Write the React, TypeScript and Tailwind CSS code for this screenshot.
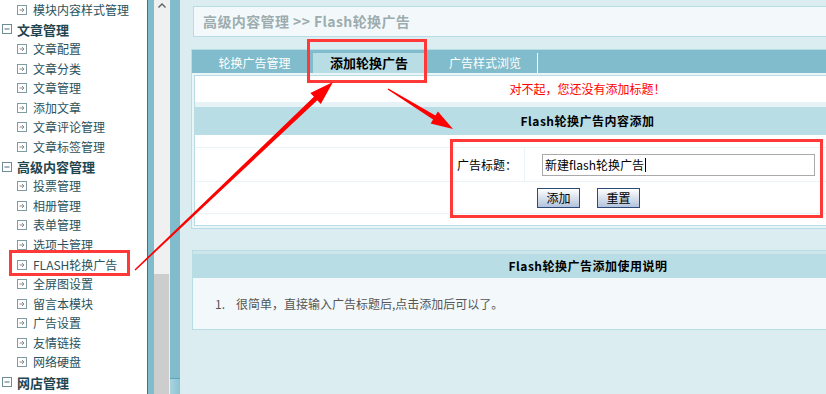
import React from "react";

type Item = { t: string; h?: boolean };

const menu: Item[] = [
  { t: "模块内容样式管理" },
  { t: "文章管理", h: true },
  { t: "文章配置" },
  { t: "文章分类" },
  { t: "文章管理" },
  { t: "添加文章" },
  { t: "文章评论管理" },
  { t: "文章标签管理" },
  { t: "高级内容管理", h: true },
  { t: "投票管理" },
  { t: "相册管理" },
  { t: "表单管理" },
  { t: "选项卡管理" },
  { t: "FLASH轮换广告" },
  { t: "全屏图设置" },
  { t: "留言本模块" },
  { t: "广告设置" },
  { t: "友情链接" },
  { t: "网络硬盘" },
  { t: "网店管理", h: true },
  { t: "商品管理" },
];

function ItemIcon() {
  return (
    <svg width="10" height="10" viewBox="0 0 10 10" className="shrink-0">
      <rect x="0.5" y="0.5" width="9" height="9" fill="#fff" stroke="#7f9ca2" />
      <path d="M2.5 5h4.5M5 3l2 2-2 2" stroke="#8c8c8c" fill="none" />
    </svg>
  );
}

function MinusIcon() {
  return (
    <svg width="10" height="10" viewBox="0 0 10 10" className="shrink-0">
      <rect x="0.5" y="0.5" width="9" height="9" fill="#fff" stroke="#6d8d94" />
      <path d="M2.5 5h5" stroke="#4f6d74" fill="none" />
    </svg>
  );
}

// tapered arrow, thin at the tail, head at (x2,y2)
function arrowPoints(x1: number, y1: number, x2: number, y2: number, w0: number, w1: number, hl: number, hw: number) {
  const dx = x2 - x1, dy = y2 - y1;
  const L = Math.hypot(dx, dy);
  const ux = dx / L, uy = dy / L;
  const nx = -uy, ny = ux;
  const bx = x2 - ux * hl, by = y2 - uy * hl;
  const p = (x: number, y: number) => `${x.toFixed(1)},${y.toFixed(1)}`;
  return [
    p(x1 + nx * w0 / 2, y1 + ny * w0 / 2),
    p(bx + nx * w1 / 2, by + ny * w1 / 2),
    p(bx + nx * hw / 2, by + ny * hw / 2),
    p(x2, y2),
    p(bx - nx * hw / 2, by - ny * hw / 2),
    p(bx - nx * w1 / 2, by - ny * w1 / 2),
    p(x1 - nx * w0 / 2, y1 - ny * w0 / 2),
  ].join(" ");
}

export default function App() {
  return (
    <div
      className="relative flex h-[394px] w-[826px] overflow-hidden bg-[#dcedf1]"
      style={{ fontFamily: '"Noto Sans CJK SC", sans-serif' }}
    >
      {/* left menu */}
      <div className="w-[147px] shrink-0 bg-white">
        <div className="mt-0">
          {menu.map((m, i) => (
            <div key={i} className="flex h-[19.6px] items-center">
              {m.h ? (
                <div className="flex items-center pl-[2px]">
                  <MinusIcon />
                  <span className="ml-[5px] text-[13px] font-bold leading-none text-[#1f4650]">{m.t}</span>
                </div>
              ) : (
                <div className="flex items-center pl-[17px]">
                  <ItemIcon />
                  <span className="ml-[6px] text-[12px] leading-none text-[#2a525c]">{m.t}</span>
                </div>
              )}
            </div>
          ))}
        </div>
      </div>
      <div className="w-px shrink-0 bg-[#4b6d75]" />
      <div className="w-[6px] shrink-0 bg-[#80bccb]" />
      {/* scrollbar */}
      <div className="flex w-[16px] shrink-0 flex-col bg-[#f0f0f0]">
        <div className="flex h-[10px] items-center justify-center">
          <svg width="8" height="5" viewBox="0 0 8 5">
            <path d="M0.5 4.5L4 1l3.5 3.5" stroke="#606060" strokeWidth="1.4" fill="none" />
          </svg>
        </div>
        <div className="flex-1" />
        <div className="mr-px h-[120px] bg-[#cdcdcd]" />
      </div>
      <div className="flex w-[10px] shrink-0 flex-col bg-[#80bccb]">
        <div className="flex-1" />
        <div className="h-[16px] border-t border-[#5fa3b4] bg-linear-to-r from-[#a9d3de] to-[#8cc4d2]" />
      </div>

      {/* main */}
      <div className="w-[816px] shrink-0 pt-[6px]">
        <div className="ml-[13px] mr-[10px] flex h-[31px] items-center border border-[#b8dce4] bg-[#f3f9fb] pl-[9px]">
          <span className="text-[14px] font-bold tracking-[0.4px] text-[#9dacae]">高级内容管理 &gt;&gt; Flash轮换广告</span>
        </div>

        {/* panel 1 */}
        <div className="ml-[11px] mr-[12px] mt-[12px] border border-[#b9dde5] bg-[#eaf5f8]">
          <div className="flex h-[23px] items-end bg-[#80bccb] pl-[4px]">
            <div className="flex h-[20px] w-[117px] items-center justify-center text-[12px] text-white">轮换广告管理</div>
            <div className="flex h-[20px] w-[112px] items-center justify-center bg-[#b9dde5] text-[13px] font-bold text-black">添加轮换广告</div>
            <div className="flex h-[20px] w-[113px] items-center justify-center border-r border-white pl-[8px] text-[12px] text-white">广告样式浏览</div>
          </div>
          <div className="m-[2px] border border-[#b9dde5] bg-white">
            <div className="flex h-[26px] items-center justify-center text-[12px] text-[#ff0000]">对不起，您还没有添加标题！</div>
            <div className="h-[5px] bg-[#e6f2f5]" />
            <div className="flex h-[28px] items-center justify-center bg-[#b9dde5] text-[12px] font-bold tracking-[0.5px] text-black">Flash轮换广告内容添加</div>
            <div className="h-[12px]" />
            <div className="flex h-[34px] items-center border-t border-[#eaf4f6]">
              <div className="flex h-full w-[330px] items-center justify-end border-r border-[#eaf4f6] pr-[7px] text-[12px] text-black">广告标题：</div>
              <div className="ml-[17px] flex h-[22px] w-[273px] items-center border border-[#aaaaaa] pl-[2px] text-[12px] text-black">
                新建flash轮换广告<span className="ml-px inline-block h-[14px] w-px bg-black" />
              </div>
            </div>
            <div className="flex h-[32px] items-center gap-[17px] border-t border-[#eaf4f6] pl-[342px]">
              <button className="h-[20px] w-[43px] border border-[#2c4b7a] bg-linear-to-b from-white to-[#b3c3dc] text-[12px] text-black">添加</button>
              <button className="h-[20px] w-[43px] border border-[#2c4b7a] bg-linear-to-b from-white to-[#b3c3dc] text-[12px] text-black">重置</button>
            </div>
            <div className="h-[12px] border-t border-[#eaf4f6]" />
          </div>
        </div>

        {/* panel 2 */}
        <div className="ml-[12px] mr-[12px] mt-[21px] border border-[#b9dde5] bg-[#f3f9fb]">
          <div className="h-[3px] bg-[#cde6ec]" />
          <div className="flex h-[24px] items-center justify-center bg-[#b9dde5] text-[12px] font-bold tracking-[0.5px] text-black">Flash轮换广告添加使用说明</div>
          <div className="flex h-[51px] items-center pl-[22px] text-[12px] text-[#555]">
            <span>1.</span>
            <span className="ml-[11px]">很简单，直接输入广告标题后,点击添加后可以了。</span>
          </div>
        </div>
      </div>

      {/* annotations */}
      <div className="pointer-events-none absolute left-[9px] top-[250px] h-[26px] w-[121px] border-[3px] border-[#ff3838]" />
      <div className="pointer-events-none absolute left-[307px] top-[39px] h-[44px] w-[120px] border-[3px] border-[#ff3838]" />
      <div className="pointer-events-none absolute left-[450px] top-[139px] h-[79px] w-[373px] border-[3px] border-[#ff3838]" />
      <svg className="pointer-events-none absolute left-0 top-0" width="826" height="394">
        <polygon points={arrowPoints(135, 270, 333, 82, 1.5, 5, 24, 15)} fill="#ff0000" />
        <polygon points={arrowPoints(388, 89, 453, 129, 1.5, 4.5, 22, 14)} fill="#ff0000" />
      </svg>
    </div>
  );
}
